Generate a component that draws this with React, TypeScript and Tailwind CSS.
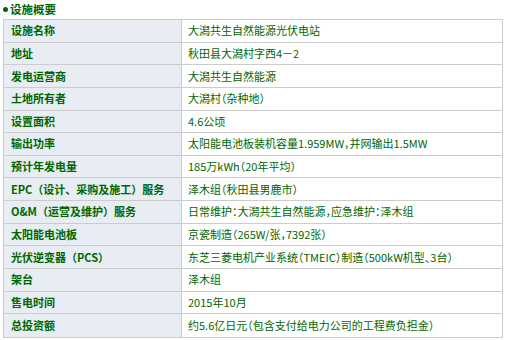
import React from "react";

const rows: [string, string][] = [
  ["设施名称", "大潟共生自然能源光伏电站"],
  ["地址", "秋田县大潟村字西4－2"],
  ["发电运营商", "大潟共生自然能源"],
  ["土地所有者", "大潟村（杂种地）"],
  ["设置面积", "4.6公顷"],
  ["输出功率", "太阳能电池板装机容量1.959MW，并网输出1.5MW"],
  ["预计年发电量", "185万kWh（20年平均）"],
  ["EPC（设计、采购及施工）服务", "泽木组（秋田县男鹿市）"],
  ["O&M（运营及维护）服务", "日常维护：大潟共生自然能源，应急维护：泽木组"],
  ["太阳能电池板", "京瓷制造（265W/张，7392张）"],
  ["光伏逆变器（PCS）", "东芝三菱电机产业系统（TMEIC）制造（500kW机型、3台）"],
  ["架台", "泽木组"],
  ["售电时间", "2015年10月"],
  ["总投资额", "约5.6亿日元（包含支付给电力公司的工程费负担金）"],
];

export default function App() {
  return (
    <div
      className="w-[507px] h-[340px] bg-white text-[#006600] text-[11px]"
      style={{ fontFamily: '"Noto Sans CJK SC", "Liberation Sans", sans-serif' }}
    >
      <div className="h-[19px] flex items-center pl-[3px] font-bold leading-none">
        <span className="w-[5px] h-[5px] rounded-full bg-[#006600] mr-[2px]" />
        <span className="text-[11.5px]">设施概要</span>
      </div>
      <div className="ml-[3px] w-[500px] border border-[#cccccc] flex flex-col">
        {rows.map(([k, v], i) => (
          <div
            key={i}
            className={`flex h-[22.64px] ${i < rows.length - 1 ? "border-b border-[#cccccc]" : ""}`}
          >
            <div className="w-[178px] shrink-0 bg-[#e7edf3] border-r border-[#cccccc] pl-[7px] flex items-center font-bold leading-none">
              {k}
            </div>
            <div className="flex-1 pl-[6px] flex items-center leading-none [font-feature-settings:'halt']">
              {v}
            </div>
          </div>
        ))}
      </div>
    </div>
  );
}
